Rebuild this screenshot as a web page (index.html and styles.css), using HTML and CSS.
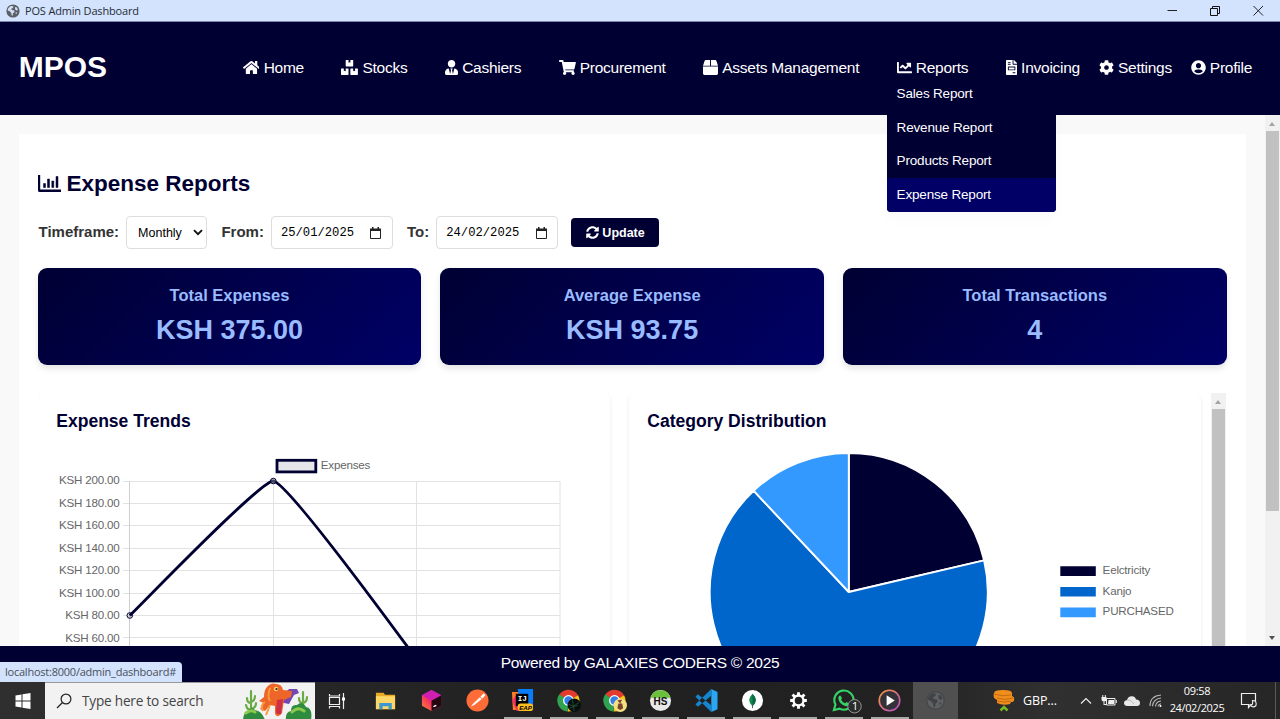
FILE: index.html
```html
<!DOCTYPE html>
<html lang="en">
<head>
<meta charset="utf-8">
<title>POS Admin Dashboard</title>
<link rel="stylesheet" href="styles.css">
</head>
<body>
<div class="titlebar">
  <svg class="globe" viewBox="0 0 14 14"><circle cx="7" cy="7" r="6.6" fill="#5c5f64"/><path d="M2 4.5 4.5 2l3 .3-.6 1.6-1.6.8.4 1.3 2.2.3.8 1.4-1.6 1.6-.5 2.4-1-.1-.3-2.5L3.700 7.300 1.700 6.500zM9 3l2 .6 1 2.400-1.700.600L9 5.300zM9.500 8.500l1.800-.300-1.300 2.400z" fill="#cfdcf3"/></svg>
  <span class="app-name">POS Admin Dashboard</span>
  <div class="window-buttons">
    <svg viewBox="0 0 12 12"><path d="M1.500 5.500h9.500" stroke="#222"/></svg>
    <svg viewBox="0 0 12 12" fill="none" stroke="#111"><path d="M1.500 3.500h7v7h-7zM3.500 3.500v-2h7v7h-2"/></svg>
    <svg viewBox="0 0 12 12"><path d="M1.500 1 11 10.500M11 1 1.500 10.500" stroke="#222"/></svg>
  </div>
</div>

<header class="header">
  <div class="logo">MPOS</div>
  <ul class="nav">
    <li><svg class="w-wide" viewBox="0 0 576 512"><path d="M280.37 148.26L96 300.11V464a16 16 0 0 0 16 16l112.06-.29a16 16 0 0 0 15.92-16V368a16 16 0 0 1 16-16h64a16 16 0 0 1 16 16v95.64a16 16 0 0 0 16 16.05L464 480a16 16 0 0 0 16-16V300L295.67 148.26a12.19 12.19 0 0 0-15.3 0zM571.6 251.47L488 182.56V44.05a12 12 0 0 0-12-12h-56a12 12 0 0 0-12 12v72.61L318.47 43a48 48 0 0 0-61 0L4.34 251.47a12 12 0 0 0-1.6 16.9l25.5 31A12 12 0 0 0 45.15 301l235.22-193.74a12.19 12.19 0 0 1 15.3 0L530.9 301a12 12 0 0 0 16.9-1.6l25.5-31a12 12 0 0 0-1.7-16.93z"/></svg><span>Home</span></li>
    <li><svg class="w-wide" viewBox="0 0 576 512"><path d="M560 288h-80v96l-32-21.3-32 21.3v-96h-80c-8.8 0-16 7.2-16 16v192c0 8.8 7.2 16 16 16h224c8.8 0 16-7.2 16-16V304c0-8.8-7.2-16-16-16zm-384-64h224c8.8 0 16-7.2 16-16V16c0-8.8-7.2-16-16-16h-80v96l-32-21.3L256 96V0h-80c-8.8 0-16 7.2-16 16v192c0 8.8 7.2 16 16 16zm64 64h-80v96l-32-21.3L96 384v-96H16c-8.8 0-16 7.2-16 16v192c0 8.8 7.2 16 16 16h224c8.8 0 16-7.2 16-16V304c0-8.8-7.2-16-16-16z"/></svg><span>Stocks</span></li>
    <li><svg class="w-tie" viewBox="0 0 448 512"><path d="M224 256c70.7 0 128-57.3 128-128S294.7 0 224 0 96 57.3 96 128s57.3 128 128 128zm95.8 32.6L272 480l-32-136 32-56h-96l32 56-32 136-47.800-191.400C56.900 292 0 350.300 0 422.400V464c0 26.500 21.500 48 48 48h352c26.500 0 48-21.500 48-48v-41.600c0-72.100-56.900-130.400-128.200-133.800z"/></svg><span>Cashiers</span></li>
    <li><svg class="w-wide" viewBox="0 0 576 512"><path d="M528.12 301.319l47.273-208C578.806 78.301 567.391 64 551.99 64H159.208l-9.166-44.81C147.758 8.021 137.93 0 126.529 0H24C10.745 0 0 10.745 0 24v16c0 13.255 10.745 24 24 24h69.883l70.248 343.435C147.325 417.1 136 435.222 136 456c0 30.928 25.072 56 56 56s56-25.072 56-56c0-15.674-6.447-29.835-16.824-40h209.647C430.447 426.165 424 440.326 424 456c0 30.928 25.072 56 56 56s56-25.072 56-56c0-22.172-12.888-41.332-31.579-50.405l5.517-24.276c3.413-15.018-8.002-29.319-23.403-29.319H218.117l-6.545-32h293.145c11.206 0 20.92-7.754 23.403-18.681z"/></svg><span>Procurement</span></li>
    <li><svg class="w-sq" viewBox="0 0 512 512"><path d="M509.5 184.6L458.9 32.8C452.4 13.2 434.1 0 413.4 0H272v192h238.7c-.4-2.5-.4-5-1.2-7.4zM240 0H98.6c-20.7 0-39 13.2-45.5 32.8L2.5 184.6c-.8 2.4-.8 4.9-1.2 7.4H240V0zM0 224v240c0 26.5 21.5 48 48 48h416c26.5 0 48-21.5 48-48V224H0z"/></svg><span>Assets Management</span></li>
    <li class="has-menu"><svg class="w-sq" viewBox="0 0 512 512"><path d="M496 384H64V80c0-8.84-7.16-16-16-16H16C7.16 64 0 71.16 0 80v336c0 17.67 14.33 32 32 32h464c8.84 0 16-7.16 16-16v-32c0-8.84-7.16-16-16-16zM464 96H345.94c-21.38 0-32.09 25.85-16.97 40.97l32.4 32.4L288 242.75l-73.37-73.37c-12.5-12.5-32.76-12.5-45.25 0l-68.69 68.69c-6.25 6.25-6.25 16.38 0 22.63l22.62 22.62c6.25 6.25 16.38 6.25 22.63 0L192 237.25l73.37 73.37c12.5 12.5 32.76 12.5 45.25 0l96-96 32.4 32.4c15.12 15.12 40.97 4.41 40.97-16.97V112c.01-8.84-7.15-16-15.99-16z"/></svg><span>Reports</span>
      <div class="menu"><a>Sales Report</a><a>Revenue Report</a><a>Products Report</a><a class="active">Expense Report</a></div>
    </li>
    <li><svg class="w-file" viewBox="0 0 384 512"><path d="M288 256H96v64h192v-64zm89-151L279.1 7c-4.5-4.5-10.6-7-17-7H256v128h128v-6.1c0-6.3-2.5-12.4-7-16.9zm-153 31V0H24C10.7 0 0 10.7 0 24v464c0 13.3 10.7 24 24 24h336c13.3 0 24-10.7 24-24V160H248c-13.2 0-24-10.8-24-24zM64 72c0-4.42 3.58-8 8-8h80c4.42 0 8 3.58 8 8v16c0 4.42-3.58 8-8 8H72c-4.42 0-8-3.58-8-8V72zm0 64c0-4.42 3.58-8 8-8h80c4.42 0 8 3.58 8 8v16c0 4.42-3.58 8-8 8H72c-4.42 0-8-3.58-8-8v-16zm256 304c0 4.42-3.58 8-8 8h-80c-4.42 0-8-3.58-8-8v-16c0-4.42 3.58-8 8-8h80c4.42 0 8 3.58 8 8v16zm0-200v96c0 8.84-7.16 16-16 16H80c-8.84 0-16-7.16-16-16v-96c0-8.84 7.16-16 16-16h224c8.84 0 16 7.16 16 16z"/></svg><span>Invoicing</span></li>
    <li class="tight"><svg class="w-sq" viewBox="0 0 512 512"><path d="M487.4 315.7l-42.6-24.6c4.3-23.2 4.3-47 0-70.2l42.6-24.6c4.9-2.8 7.1-8.6 5.5-14-11.1-35.6-30-67.8-54.7-94.6-3.8-4.1-10-5.1-14.8-2.3L380.8 110c-17.9-15.4-38.5-27.3-60.8-35.1V25.8c0-5.6-3.9-10.5-9.4-11.7-36.7-8.2-74.3-7.8-109.2 0-5.5 1.2-9.4 6.1-9.4 11.7V75c-22.2 7.9-42.8 19.8-60.8 35.1L88.7 85.5c-4.9-2.8-11-1.9-14.8 2.3-24.7 26.7-43.6 58.9-54.7 94.6-1.7 5.4.6 11.2 5.5 14L67.3 221c-4.3 23.2-4.3 47 0 70.2l-42.6 24.6c-4.9 2.8-7.1 8.6-5.5 14 11.1 35.6 30 67.8 54.7 94.6 3.8 4.1 10 5.1 14.8 2.3l42.6-24.6c17.9 15.4 38.5 27.3 60.8 35.1v49.2c0 5.6 3.9 10.5 9.4 11.7 36.7 8.2 74.3 7.8 109.2 0 5.5-1.2 9.4-6.1 9.4-11.700v-49.200c22.200-7.900 42.800-19.800 60.800-35.100l42.600 24.600c4.900 2.800 11 1.900 14.800-2.300 24.700-26.700 43.600-58.900 54.700-94.600 1.500-5.500-.7-11.300-5.600-14.100zM256 336c-44.100 0-80-35.900-80-80s35.900-80 80-80 80 35.900 80 80-35.900 80-80 80z"/></svg><span>Settings</span></li>
    <li class="tight"><svg class="w-sq" viewBox="0 0 496 512"><path d="M248 8C111 8 0 119 0 256s111 248 248 248 248-111 248-248S385 8 248 8zm0 96c48.600 0 88 39.400 88 88s-39.400 88-88 88-88-39.400-88-88 39.400-88 88-88zm0 344c-58.700 0-111.300-26.600-146.500-68.200 18.800-35.400 55.600-59.800 98.500-59.800 2.400 0 4.800.4 7.100 1.100 13 4.200 26.600 6.900 40.900 6.900 14.300 0 28-2.700 40.900-6.900 2.300-.7 4.700-1.100 7.100-1.100 42.900 0 79.700 24.400 98.500 59.800C359.300 421.400 306.700 448 248 448z"/></svg><span>Profile</span></li>
  </ul>
</header>

<main class="main">
  <section class="panel">
    <h2 class="heading"><svg viewBox="0 0 23 18"><path d="M0 0h2.200v14.600H23V17H1.600Q0 17 0 15.400z"/><path d="M5.500 8.500h2v4h-2zM9.500 4h2v8.500h-2zM13.800 6h2v6.500h-2zM18 1.500h2v11h-2z" stroke="#000033" stroke-width=".5"/></svg><span>Expense Reports</span></h2>
    <div class="filters">
      <label>Timeframe:</label>
      <div class="field select"><span>Monthly</span><svg viewBox="0 0 10 7"><path d="M1 1.200 5 5.200 9 1.200" fill="none" stroke="#111" stroke-width="1.900"/></svg></div>
      <label>From:</label>
      <div class="field date"><span>25/01/2025</span><svg viewBox="0 0 11 12"><path d="M.5 2.500h10v9H.5z" fill="none" stroke="#222"/><path d="M0 1.500h11v2.500H0zM2 0h1.500v2H2zM7.500 0H9v2H7.500z" fill="#222"/></svg></div>
      <label>To:</label>
      <div class="field date"><span>24/02/2025</span><svg viewBox="0 0 11 12"><path d="M.5 2.500h10v9H.5z" fill="none" stroke="#222"/><path d="M0 1.500h11v2.500H0zM2 0h1.500v2H2zM7.500 0H9v2H7.500z" fill="#222"/></svg></div>
      <button class="update"><svg viewBox="0 0 512 512"><path d="M370.72 133.28C339.458 104.008 298.888 87.962 255.848 88c-77.458.068-144.328 53.178-162.791 126.850-1.344 5.363-6.122 9.150-11.651 9.150H24.103c-7.498 0-13.194-6.807-11.807-14.176C33.933 94.924 134.813 8 256 8c66.448 0 126.791 26.136 171.315 68.685L463.030 40.970C478.149 25.851 504 36.559 504 57.941V192c0 13.255-10.745 24-24 24H345.941c-21.382 0-32.090-25.851-16.971-40.971l41.750-41.749zM32 296h134.059c21.382 0 32.090 25.851 16.971 40.971l-41.750 41.750c31.262 29.273 71.835 45.319 114.876 45.280 77.418-.070 144.315-53.144 162.787-126.849 1.344-5.363 6.122-9.150 11.651-9.150h57.304c7.498 0 13.194 6.807 11.807 14.176C478.067 417.076 377.187 504 256 504c-66.448 0-126.791-26.136-171.315-68.685L48.970 471.030C33.851 486.149 8 475.441 8 454.059V320c0-13.255 10.745-24 24-24z"/></svg><span>Update</span></button>
    </div>
    <div class="stats">
      <div class="stat"><h3>Total Expenses</h3><p>KSH 375.00</p></div>
      <div class="stat"><h3>Average Expense</h3><p>KSH 93.75</p></div>
      <div class="stat"><h3>Total Transactions</h3><p>4</p></div>
    </div>
    <div class="charts">
      <div class="chart-card">
        <h3>Expense Trends</h3>
        <svg class="chart" viewBox="56 440 536 220">
          <g stroke="#e2e2e2" stroke-width="1">
            <path d="M123 481.500h437M123 503.500h437M123 525.500h437M123 548.500h437M123 570.500h437M123 593.500h437M123 615.500h437M123 637.500h437M273.500 481v180M416.500 481v180M560 481v180"/>
            <path d="M129.500 481v180" stroke="#cfcfcf"/>
          </g>
          <rect x="277" y="460.300" width="38.800" height="11.600" fill="#e5e5ea" stroke="#000033" stroke-width="2.800"/>
          <text x="320.800" y="469">Expenses</text>
          <g text-anchor="end">
            <text x="119.500" y="484">KSH 200.00</text><text x="119.500" y="506.500">KSH 180.00</text><text x="119.500" y="529">KSH 160.00</text><text x="119.500" y="551.500">KSH 140.00</text><text x="119.500" y="574">KSH 120.00</text><text x="119.500" y="596.500">KSH 100.00</text><text x="119.500" y="619">KSH 80.00</text><text x="119.500" y="641.500">KSH 60.00</text>
          </g>
          <path d="M129.800 615.500C144 602 260 481 273.300 481 288.600 483 400 637 416.500 659" fill="none" stroke="#000033" stroke-width="2.800"/>
          <g fill="#000033" fill-opacity=".1" stroke="#000033" stroke-width="1"><circle cx="129.800" cy="615.500" r="2.800"/><circle cx="273.300" cy="481" r="2.800" fill="#888" fill-opacity=".5"/></g>
        </svg>
      </div>
      <div class="chart-card">
        <h3>Category Distribution</h3>
        <svg class="chart" viewBox="647.200 440 536 220">
          <g stroke="#fff" stroke-width="1.900" stroke-linejoin="bevel">
            <path d="M849 592V453A139 139 0 0 1 984.300 560.300z" fill="#000033"/>
            <path d="M849 592 984.300 560.300A139 139 0 1 1 753.800 490.700z" fill="#0066cc"/>
            <path d="M849 592 753.800 490.700A139 139 0 0 1 849 453z" fill="#3399ff"/>
          </g>
          <path d="M1060.500 566.300h35.500v9.700h-35.500z" fill="#000033"/><path d="M1060.500 586.900h35.500v9.700h-35.500z" fill="#0066cc"/><path d="M1060.500 607.500h35.500v9.700h-35.500z" fill="#3399ff"/>
          <text x="1102.800" y="574">Eelctricity</text><text x="1102.800" y="594.500">Kanjo</text><text x="1102.800" y="615">PURCHASED</text>
        </svg>
      </div>
      <div class="scrollbar inner"><i class="arrow up"></i><div class="thumb"></div></div>
    </div>
  </section>
  <div class="scrollbar outer"><i class="arrow up"></i><div class="thumb"></div><i class="arrow down"></i></div>
</main>

<footer class="footer">Powered by GALAXIES CODERS © 2025<div class="status">localhost:8000/admin_dashboard#</div></footer>

<div class="taskbar">
  <div class="start"><svg width="16" height="16" viewBox="0 0 16 16"><path d="M.5 2.500 6.500 1.500v6h-6zM7.500 1.300 15.500 0v7.500h-8zM.5 8.500h6v6l-6-1zM7.500 8.500h8V16l-8-1.300z" fill="#fff"/></svg></div>
  <div class="search">
    <svg width="16" height="16" viewBox="0 0 16 16" fill="none" stroke="#222" stroke-width="1.200"><circle cx="10" cy="6" r="4.900"/><path d="M6.500 9.500 1 15"/></svg>
    <span>Type here to search</span>
    <svg class="art" width="70" height="37" viewBox="0 0 70 37"><path d="M8 8v24M4 15q0 5 4 5M12 13q0 5-4 6M3 22q1 5 5 5M13 20q0 5-5 6M60 9v20M56 15q0 5 4 5M64 14q0 5-4 6" fill="none" stroke="#6bab45" stroke-width="2.200" stroke-linecap="round"/><path d="M0 37q1-9 5-9 3-5 7-1 7 1 10 10zM43 37q-1-8 5-9 0-7 6-6 5-5 9 2 7 1 5 13z" fill="#2f8c3e"/><path d="M3 30q5-4 9-1M49 29q6-6 12-1" stroke="#8bc94c" stroke-width="3" fill="none" stroke-linecap="round"/><path d="M35 8q8 2 11-2l8 0 2 4-5 2-5 9-10-2z" fill="#7446b2"/><path d="M24 4q4-5 9-3 6 0 7 6l9 1-1 6-7 3-2 13q-4 6-7 1l0-8-5-1-5 6-5-2 4-6-5-2 5-4q0-7 3-10z" fill="#ed6528"/><path d="M27 5q-3 9 0 13M22 19q-5 3-2 9M27 22l-4 10" stroke="#f99a3c" stroke-width="2" fill="none"/><path d="M34 17l6-1-2 15q-5 1-5-3z" fill="#cf3048"/><circle cx="33" cy="6" r="2.200" fill="#ffd26a"/><circle cx="33.500" cy="6" r="1.100" fill="#222"/></svg>
  </div>
  <div class="task-view"><svg width="18" height="18" viewBox="0 0 18 18" fill="none" stroke="#eee" stroke-width="1.200"><path d="M1.500 5.500h10v7h-10zM1.500 2v2h10V2M1.500 16.500v-2h10v2M15.500 1v16"/><path d="M14 5.500h3v3h-3z" fill="#fff" stroke="none"/></svg></div>
  <div class="app"><svg viewBox="0 0 24 24"><path d="M2 4h8l1.500 2H22v15H2z" fill="#e9ab25"/><path d="M2 7.500h20V21H2z" fill="#ffd766"/><path d="M5.500 21v-6.500h13V21h-3.300v-3H9v3z" fill="#3b96d2"/></svg></div>
  <div class="app"><svg viewBox="0 0 24 24"><defs><linearGradient id="jb" x1="0" y1="1" x2="1" y2="0"><stop offset="0" stop-color="#ff8a2b"/><stop offset=".45" stop-color="#f52c66"/><stop offset="1" stop-color="#7a35ff"/></linearGradient></defs><path d="M12 1l10 5.500v11L12 23 2 17.500v-11z" fill="url(#jb)"/><path d="M12 12 22 6.500v11L12 23z" fill="#26060f"/><path d="M2 6.500 12 1l10 5.500L12 12z" fill="#cf1fb0"/><path d="M14 18.500l3-1.500" stroke="#fff" stroke-width="1.500"/></svg></div>
  <div class="app"><svg viewBox="0 0 24 24"><circle cx="12" cy="12" r="11.500" fill="#ff6c37"/><path d="M5 18.500 7.500 15l7-6.500 2 2L9 16.500zM15 8l3.500-3.500 1.800 1.800-3 3.700z" fill="#fff"/></svg></div>
  <div class="app open"><svg viewBox="0 0 24 24"><path d="M1 3h7l10 19H2z" fill="#ff7a2a"/><path d="M7 0h16v18H10z" fill="#087cfa"/><path d="M1 12l5 11 8-1-9-15z" fill="#f7305f"/><path d="M5 5h13v13H5z" fill="#000"/><text x="7" y="13" class="badge-light">IJ</text><rect x="7" y="15" width="16" height="8" rx="3" fill="#ffbd20"/><text x="8.500" y="21.500" class="badge-dark">EAP</text></svg></div>
  <div class="app open"><svg viewBox="0 0 24 24"><path d="M12 12 2.400 6A11.500 11.500 0 0 1 22 6.500z" fill="#e33b2e"/><path d="M12 12 22 6.500A11.500 11.500 0 0 1 11 23.500z" fill="#fbc116"/><path d="M12 12l-1 11.500A11.500 11.500 0 0 1 2.400 5.500z" fill="#31a350"/><circle cx="12" cy="12" r="5.700" fill="#fff"/><circle cx="12" cy="12" r="4.400" fill="#347ee8"/><circle cx="18" cy="17" r="7" fill="#080f0c"/><path d="M12 16l5 2 6-4M16 11l2 12M13 20l9-3" stroke="#276142" stroke-width=".7" fill="none"/></svg></div>
  <div class="app open"><svg viewBox="0 0 24 24"><path d="M12 12 2.400 6A11.500 11.500 0 0 1 22 6.500z" fill="#e33b2e"/><path d="M12 12 22 6.500A11.500 11.500 0 0 1 11 23.500z" fill="#fbc116"/><path d="M12 12l-1 11.500A11.500 11.500 0 0 1 2.400 5.500z" fill="#31a350"/><circle cx="12" cy="12" r="5.700" fill="#fff"/><circle cx="12" cy="12" r="4.400" fill="#347ee8"/><circle cx="18" cy="17" r="7" fill="#f6df83"/><path d="M16 15h4l1 5-3 2-3-2zM15 12l3 3 2-4" fill="#76452a"/></svg></div>
  <div class="app open"><svg viewBox="0 0 24 24"><circle cx="12" cy="12" r="11" fill="#e9e9e9"/><path d="M1.500 9a11 11 0 0 1 21 0z" fill="#6cc13a"/><text x="4.600" y="16.300" class="badge-hs">HS</text></svg></div>
  <div class="app open"><svg viewBox="0 0 24 24"><path d="M17 0 23.500 3v18L17 24z" fill="#2aa6f2"/><path d="M17 0v7L3 18.500.5 16zM17 24v-7L3 5.500.5 8z" fill="#1585ce"/></svg></div>
  <div class="app open"><svg viewBox="0 0 24 24"><circle cx="12" cy="12" r="11" fill="#fff"/><path d="M12 5q7 7 0 13-7-6 0-13z" fill="#118b50"/><path d="M12 5q7 7 0 13z" fill="#0b6744"/><path d="M12 17v3" stroke="#555"/></svg></div>
  <div class="app open"><svg viewBox="0 0 24 24"><circle cx="12" cy="12" r="5.200" fill="none" stroke="#fff" stroke-width="2.500"/><path d="M12 3.300v3M12 17.700v3M3.300 12h3M17.700 12h3M5.800 5.800l2.200 2.200M16 16l2.200 2.200M18.200 5.800 16 8M8 16l-2.200 2.200" stroke="#fff" stroke-width="3"/></svg></div>
  <div class="app open"><svg viewBox="0 0 24 24"><path d="M2 22l1.600-5.800A10 10 0 1 1 8 20.500z" fill="none" stroke="#35d366" stroke-width="2.200"/><path d="M8.500 6.500l2 3-1 1.600q1.500 3 4.200 3.800l1.300-1.300 3 1.400q-.5 3-3.500 3Q7.500 16.500 6.500 9.500q.3-2.300 2-3z" fill="#35d366"/><circle cx="23.500" cy="18" r="7" fill="#292d2b" stroke="#999" stroke-width="1"/><text x="20.500" y="22.300" class="count">1</text></svg></div>
  <div class="app open"><svg viewBox="0 0 24 24"><defs><linearGradient id="md" x1="0" y1="0" x2="1" y2="1"><stop offset="0" stop-color="#ff9a3b"/><stop offset="1" stop-color="#b44bd1"/></linearGradient></defs><circle cx="12" cy="12" r="10.700" fill="#343239" stroke="url(#md)" stroke-width="1.700"/><path d="M9 6.500v11l8.500-5.500z" fill="#fff"/></svg></div>
  <div class="app current"><svg viewBox="-1 -1 16 16"><circle cx="7" cy="7" r="6.100" fill="#606162" stroke="#45484a"/><path d="M2 4.500 4.500 2l3 .3-.6 1.600-1.600.8.4 1.300 2.200.3.8 1.400-1.600 1.600-.5 2.400-1-.1-.3-2.500L3.700 7.300 1.700 6.500zM9 3l2 .6 1 2.400-1.700.6L9 5.300zM9.500 8.500l1.800-.3-1.300 2.400z" fill="#404345"/></svg></div>
  <div class="tray">
    <svg class="t-coins" width="22" height="24" viewBox="0 0 22 24"><path d="M1 4q0-3 9-3 9 0 9 3v3q3 1 2 4 0 2-3 2l-1 2q-7 2-13-1v-3l-3-2q-1-3 0-5z" fill="#f08e1c"/><path d="M1 5q8 3 17 1M4 9q8 3 16 0M4 12q8 2 14 0" stroke="#b96110" stroke-width=".8" fill="none"/><path d="M7.500 21.500 11 18l3.500 3.500" fill="none" stroke="#75b927" stroke-width="2.500"/></svg>
    <span class="t-gbp">GBP...</span>
    <svg class="t-chev" width="12" height="8" viewBox="0 0 12 8"><path d="M1 6.500 6 1.500l5 5" fill="none" stroke="#eee" stroke-width="1.200"/></svg>
    <svg class="t-bat" width="16" height="12" viewBox="0 0 16 12"><path d="M5.500 3.500h8.500v6.500H5.500zM15.300 5v3" fill="none" stroke="#eee"/><path d="M7.500 5H13v4H7zM.5 2h5v2Q5.500 6.500 3 6.500.5 6.500.5 4zM1.300 0h1v2h-1zM3.800 0h1v2h-1zM2.500 6h1v3h2v1h-3z" fill="#eee"/></svg>
    <svg class="t-cloud" width="16" height="12" viewBox="0 0 16 12"><path d="M3.500 11Q0 11 0 8q0-2.500 3-3Q4 1 8 1.200q3 0 4 3.300 4 0 4 3.500 0 3-3 3z" fill="#e8e8e8"/><path d="M3 5q4-1 7 4" stroke="#bbb" fill="none"/></svg>
    <svg class="t-wifi" width="13" height="13" viewBox="0 0 13 13"><g fill="none" stroke="#bbb" stroke-width="1.100"><path d="M1 12Q1 2 12 1M3.500 12.200Q4 5 12 4M6.500 12.500Q7 7.500 12 7M9 12.500Q9.500 10 12 9.700"/></g><circle cx="11.500" cy="12" r="1" fill="#fff"/></svg>
    <div class="clock"><span>09:58</span><span>24/02/2025</span></div>
    <svg class="t-note" width="18" height="17" viewBox="0 0 18 17"><path d="M1.500 1.500h14v11H11l-2.500 3v-3h-7z" fill="none" stroke="#eee" stroke-width="1.200"/><path d="M12.500 8.500q4.500 0 3.500 5-3 3-6-.500 3.500.5 2.500-4.500z" fill="#262626" stroke="#eee" stroke-width="1.100"/></svg>
    <div class="peek"></div>
  </div>
</div>
</body>
</html>
```

FILE: styles.css
```css
* { box-sizing: border-box; }
html, body { margin: 0; height: 100%; overflow: hidden; }
body { display: flex; flex-direction: column; width: 1280px; height: 719px; font: 15px "Liberation Sans", Arial, sans-serif; color: #333; background: #f9f9f9; }
svg { display: block; flex: none; }
h2, h3, p, ul { margin: 0; padding: 0; }

.titlebar { flex: none; height: 22px; display: flex; align-items: center; padding: 0 10px 0 6px; background: #d3e3fd; border-bottom: 1px solid #7f86ab; }
.globe { width: 14px; height: 14px; margin-right: 5px; }
.app-name { font: 11px "Open Sans", "Noto Sans", sans-serif; letter-spacing: -.17px; color: #252c36; }
.window-buttons { margin-left: auto; display: flex; gap: 31px; padding-right: 6px; }
.window-buttons svg { width: 12px; height: 12px; }

.header { flex: none; position: relative; z-index: 2; height: 93px; display: flex; align-items: center; padding: 0 28px 0 18.75px; background: #000033; color: #fff; }
.logo { font-size: 30px; font-weight: bold; padding-bottom: 3px; }
.nav { margin-left: auto; display: flex; list-style: none; padding-bottom: 2px; }
.nav li { display: flex; align-items: center; gap: 4.2px; margin-left: 37.4px; line-height: 17px; white-space: nowrap; position: relative; }
.nav li.tight { margin-left: 18.75px; }
.nav li > span { font-size: 15.5px; letter-spacing: -.255px; }
.nav svg { height: 15px; fill: #fff; }
.w-wide { width: 16.9px; }
.w-tie { width: 13.1px; }
.w-sq { width: 15px; }
.w-file { width: 11.25px; }
.menu { position: absolute; left: -9.4px; top: 18px; width: 168.500px; background: #000033; border-radius: 0 0 4px 4px; overflow: hidden; box-shadow: 0 8px 15px rgba(0,0,0,.02); }
.menu a { display: block; height: 33.700px; line-height: 33.700px; padding-left: 9.400px; font-size: 13.5px; letter-spacing: -.18px; }
.menu .active { background: #000066; }

.main { flex: none; height: 531px; display: flex; overflow: hidden; background: #f9f9f9; }
.panel { width: 1227px; height: 560px; margin: 19px 19px 0 18.750px; padding: 37px 18.750px 0; background: #fff; }
.heading { display: flex; align-items: center; gap: 6px; height: 26px; font-size: 22.500px; color: #000033; }
.heading svg { width: 23px; height: 18px; fill: #000033; }
.filters { display: flex; align-items: center; margin-top: 19px; height: 33px; }
.filters label { font-weight: bold; padding: 0 7px 2px 1px; }
.field { display: flex; align-items: center; justify-content: space-between; height: 33px; border: 1px solid #ddd; border-radius: 4px; background: #fff; color: #000; margin-right: 13.3px; }
.select { width: 81px; padding: 0 3px 0 11px; font-size: 12.500px; }
.select svg { width: 10px; height: 7px; }
.date { width: 121.8px; padding: 1px 10.500px 0 9px; font: 12.200px "Liberation Mono", monospace; }
.date svg { width: 11px; height: 12px; }
.update { display: flex; align-items: center; justify-content: center; gap: 3.500px; width: 88px; height: 29px; padding: 0; border: 0; border-radius: 4px; background: #000033; color: #fff; font: bold 12.5px "Liberation Sans", Arial, sans-serif; }
.update svg { width: 13px; height: 13px; fill: #fff; }

.stats { display: grid; grid-template-columns: repeat(3, 1fr); gap: 18.750px; margin-top: 19px; }
.stat { height: 97px; border-radius: 9px; background: linear-gradient(135deg, #000033, #000066); box-shadow: 0 4px 6px rgba(0,0,0,.1); color: #99bbff; text-align: center; padding-top: 18px; }
.stat h3 { font-size: 16.500px; line-height: 19px; }
.stat p { font-size: 27px; font-weight: bold; line-height: 30px; margin-top: 10px; }

.charts { display: flex; margin-top: 28px; height: 280px; overflow: hidden; }
.chart-card { width: 572.500px; margin-right: 18.500px; padding: 18px 18px 0 18.750px; border-radius: 8px; background: #fff; box-shadow: 0 2px 4px rgba(0,0,0,.09); }
.chart-card + .chart-card { margin-right: 9.500px; }
.chart-card h3 { font-size: 17.550px; line-height: 21px; color: #000033; }
.chart { width: 536px; height: 220px; margin-top: 8px; }
.chart text { font: 11.600px "Liberation Sans", Arial, sans-serif; letter-spacing: -.2px; fill: #666; }

.scrollbar { display: flex; flex-direction: column; align-items: center; background: #f1f1f1; }
.scrollbar .thumb { width: 12.500px; background: #c1c1c1; }
.inner { width: 15.500px; flex: none; }
.inner .thumb { flex: 1; }
.outer { width: 15.500px; flex: none; margin-left: auto; }
.outer .thumb { height: 380px; }
.arrow { width: 0; height: 0; border: 3.500px solid transparent; }
.up { border-top: 0; border-bottom: 4px solid #a3a3a3; margin: 7px 0 5px; }
.down { border-bottom: 0; border-top: 4px solid #505050; margin: auto 0 6px; }

.footer { flex: none; height: 36px; position: relative; line-height: 34px; text-align: center; background: #000033; color: #fff; font-size: 15.5px; letter-spacing: -.28px; }
.status { position: absolute; left: 0; bottom: 0; width: 182px; height: 20px; padding-left: 5px; text-align: left; background: #d3e3fd; border-radius: 0 4px 0 0; color: #4a4f5a; font: 11px/20px "Open Sans", "Noto Sans", sans-serif; letter-spacing: -.23px; white-space: nowrap; }

.taskbar { flex: none; height: 37px; display: flex; background: linear-gradient(90deg, #2f2f2f, #202020 45%, #222 70%, #303030 82%, #262626); font-family: "Open Sans", "Noto Sans", sans-serif; color: #fff; }
.taskbar > div { flex: none; display: flex; align-items: center; justify-content: center; }
.taskbar .start { width: 45px; }
.taskbar .search { width: 269.500px; background: #f2f2f2; border-top: 1px solid #999; color: #444; font-size: 13.6px; letter-spacing: -.2px; justify-content: flex-start; padding-left: 11px; }
.search span { margin-left: 10px; padding-bottom: 1px; }
.search .art { margin-left: auto; margin-right: 2px; }
.taskbar .task-view { width: 48px; padding-right: 3px; }
.taskbar .app { width: 45.850px; position: relative; }
.app svg { width: 23px; height: 23px; overflow: visible; }
.app.open::after { content: ""; position: absolute; left: 4px; right: 4px; bottom: 0; height: 2px; background: #a9a9a9; }
.app.current { background: #505050; }
.badge-light, .badge-hs { font: bold 8px "Liberation Mono", monospace; fill: #fff; }
.badge-dark { font: italic bold 6.500px "Liberation Sans", sans-serif; fill: #000; }
.badge-hs { font: bold 10.500px "Liberation Sans", sans-serif; fill: #111; }
.count { font: 12px "Open Sans", sans-serif; fill: #fff; }
.taskbar .tray { flex: 1; justify-content: flex-start; padding-left: 35px; }
.t-gbp { font-size: 12.500px; width: 35px; margin-left: 7.5px; letter-spacing: -.1px; }
.t-chev { margin-left: 22px; }
.t-bat { margin-left: 9px; }
.t-cloud { margin-left: 7px; }
.t-wifi { margin-left: 9px; }
.clock { display: flex; flex-direction: column; align-items: center; width: 60px; margin-left: 5px; padding-bottom: 2px; font-size: 11px; line-height: 16.5px; letter-spacing: -.37px; }
.t-note { margin-left: 13px; }
.peek { width: 1px; height: 37px; margin-left: auto; margin-right: 4px; background: #5a5a5a; }
```
